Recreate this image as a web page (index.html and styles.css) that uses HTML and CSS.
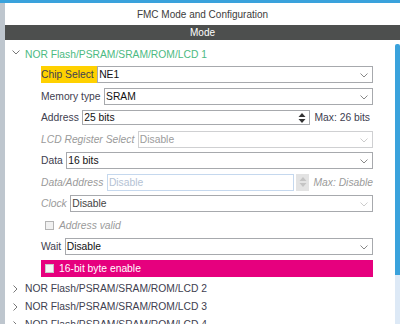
FILE: index.html
```html
<html lang="en">
 <head>
  <meta charset="UTF-8">
  <title>FMC Mode and Configuration</title>
  <link rel="stylesheet" href="styles.css">
 </head>
 <body>
  <div class="frame">
   <div class="side-strip"></div>
   <div class="panel">
    <div class="panel-title">FMC Mode and Configuration</div>
    <div class="mode-bar">Mode</div>
    <div class="content">
     <div class="tree">
      <div class="tree-head open">
       <svg class="chev" width="8" height="5" viewBox="0 0 8 5"><path d="M0.5 0.5 L4 4 L7.5 0.5" fill="none" stroke="#777" stroke-width="1"/></svg>
       <span>NOR Flash/PSRAM/SRAM/ROM/LCD 1</span>
      </div>
      <div class="form">
       <div class="row">
        <span class="label highlight">Chip Select</span>
        <div class="field">NE1<svg class="drop" width="8" height="5" viewBox="0 0 8 5"><path d="M0.5 0.5 L4 4 L7.5 0.5" fill="none" stroke="#888" stroke-width="1"/></svg></div>
       </div>
       <div class="row">
        <span class="label">Memory type</span>
        <div class="field">SRAM<svg class="drop" width="8" height="5" viewBox="0 0 8 5"><path d="M0.5 0.5 L4 4 L7.5 0.5" fill="none" stroke="#888" stroke-width="1"/></svg></div>
       </div>
       <div class="row">
        <span class="label">Address</span>
        <div class="field spin-field">25 bits
         <svg class="spin" width="8" height="12" viewBox="0 0 8 12"><path d="M4 1 L7.5 5 L0.5 5 Z M4 11 L7.5 7 L0.5 7 Z" fill="#333"/></svg>
        </div>
        <span class="max">Max: 26 bits</span>
       </div>
       <div class="row">
        <span class="label disabled">LCD Register Select</span>
        <div class="field off">Disable<svg class="drop" width="8" height="5" viewBox="0 0 8 5"><path d="M0.5 0.5 L4 4 L7.5 0.5" fill="none" stroke="#ccc" stroke-width="1"/></svg></div>
       </div>
       <div class="row">
        <span class="label">Data</span>
        <div class="field">16 bits<svg class="drop" width="8" height="5" viewBox="0 0 8 5"><path d="M0.5 0.5 L4 4 L7.5 0.5" fill="none" stroke="#888" stroke-width="1"/></svg></div>
       </div>
       <div class="row">
        <span class="label disabled">Data/Address</span>
        <div class="field off-blue">Disable</div>
        <div class="spin-box">
         <svg width="8" height="12" viewBox="0 0 8 12"><path d="M4 1 L7.5 5 L0.5 5 Z M4 11 L7.5 7 L0.5 7 Z" fill="#c4c4c4"/></svg>
        </div>
        <span class="max disabled">Max: Disable</span>
       </div>
       <div class="row">
        <span class="label disabled">Clock</span>
        <div class="field clock">Disable<svg class="drop" width="8" height="5" viewBox="0 0 8 5"><path d="M0.5 0.5 L4 4 L7.5 0.5" fill="none" stroke="#ccc" stroke-width="1"/></svg></div>
       </div>
       <div class="row check-row">
        <span class="box"></span>
        <span class="disabled">Address valid</span>
       </div>
       <div class="row">
        <span class="label">Wait</span>
        <div class="field">Disable<svg class="drop" width="8" height="5" viewBox="0 0 8 5"><path d="M0.5 0.5 L4 4 L7.5 0.5" fill="none" stroke="#888" stroke-width="1"/></svg></div>
       </div>
       <div class="row check-row pink">
        <span class="box"></span>
        <span>16-bit byte enable</span>
       </div>
      </div>
      <div class="tree-head">
       <svg class="chev-r" width="5" height="8" viewBox="0 0 5 8"><path d="M0.5 0.5 L4 4 L0.5 7.5" fill="none" stroke="#777" stroke-width="1"/></svg>
       <span>NOR Flash/PSRAM/SRAM/ROM/LCD 2</span>
      </div>
      <div class="tree-head">
       <svg class="chev-r" width="5" height="8" viewBox="0 0 5 8"><path d="M0.5 0.5 L4 4 L0.5 7.5" fill="none" stroke="#777" stroke-width="1"/></svg>
       <span>NOR Flash/PSRAM/SRAM/ROM/LCD 3</span>
      </div>
      <div class="tree-head">
       <svg class="chev-r" width="5" height="8" viewBox="0 0 5 8"><path d="M0.5 0.5 L4 4 L0.5 7.5" fill="none" stroke="#777" stroke-width="1"/></svg>
       <span>NOR Flash/PSRAM/SRAM/ROM/LCD 4</span>
      </div>
     </div>
     <div class="scrollbar">
      <div class="thumb"></div>
      <div class="track"></div>
     </div>
    </div>
   </div>
  </div>
 </body>
</html>
```

FILE: styles.css
```css
* {
    margin: 0;
    padding: 0;
    box-sizing: border-box;
}

body {
    width: 400px;
    height: 324px;
    overflow: hidden;
    background: white;
    font-family: 'Liberation Sans', Arial, sans-serif;
    font-size: 10.3px;
    color: #40404f;
}

.frame {
    display: flex;
    height: 324px;
    border-top: 3px solid #3aa2dc;
}

.side-strip {
    width: 5px;
    background: #bec6ce;
    flex-shrink: 0;
}

.panel {
    flex: 1;
    display: flex;
    flex-direction: column;
    min-width: 0;
}

.panel-title {
    height: 22px;
    display: flex;
    align-items: center;
    justify-content: center;
    font-size: 10px;
    color: #3c3c3c;
}

.mode-bar {
    height: 15px;
    background: #4d4f4e;
    color: white;
    font-size: 10px;
    display: flex;
    align-items: center;
    justify-content: center;
}

.content {
    flex: 1;
    display: flex;
    min-height: 0;
}

.tree {
    flex: 1;
    padding-top: 6px;
    padding-right: 22px;
    overflow: hidden;
}

.tree-head {
    height: 18px;
    display: flex;
    align-items: center;
    white-space: nowrap;
}

.tree-head.open {
    height: 16px;
    color: #4cba82;
}

.chev {
    margin-left: 7px;
    margin-right: 5px;
    margin-top: -3px;
}

.chev-r {
    margin-left: 8px;
    margin-right: 7px;
}

.form {
    display: flex;
    flex-direction: column;
    gap: 4.5px;
    padding-left: 36px;
    margin-top: 4px;
    margin-bottom: 3px;
}

.row {
    height: 17px;
    display: flex;
    align-items: center;
    white-space: nowrap;
}

.label {
    height: 17px;
    display: flex;
    align-items: center;
    padding-right: 3.5px;
}

.label.highlight {
    background: #ffd100;
}

.disabled {
    color: #9a9a9a;
    font-style: italic;
}

.field {
    flex: 1;
    height: 17px;
    border: 1px solid #a7a9ad;
    background: white;
    color: #111;
    padding-left: 1px;
    display: flex;
    align-items: center;
    position: relative;
}

.drop {
    position: absolute;
    right: 4px;
    top: 6px;
}

.field.off {
    border-color: #cfd0d2;
    color: #9c9c9c;
}

.field.off-blue {
    border-color: #c5d8ee;
    color: #b4c2d4;
}

.field.clock {
    color: #444;
}

.spin-field {
    height: 15px;
}

.spin {
    position: absolute;
    right: 3px;
    top: 1px;
}

.spin-box {
    width: 13px;
    height: 17px;
    margin-left: 2px;
    background: #e3e3e3;
    display: flex;
    align-items: center;
    justify-content: center;
}

.max {
    margin-left: 4px;
    padding-right: 3px;
}

.max.disabled {
    padding-right: 0;
}

.check-row {
    gap: 5px;
    padding-left: 4px;
}

.box {
    width: 9px;
    height: 9px;
    border: 1px solid #b4b4b4;
    background: #f1f1f1;
}

.pink {
    background: #e6007e;
    color: white;
}

.pink .box {
    background: #f4f4f4;
    border-color: #c8c8c8;
}

.scrollbar {
    width: 5px;
    display: flex;
    flex-direction: column;
    padding-top: 4px;
}

.thumb {
    height: 231px;
    background: #3aa2dc;
    border-radius: 2px 2px 0 0;
}

.track {
    flex: 1;
    background: #dde9f6;
}
```
